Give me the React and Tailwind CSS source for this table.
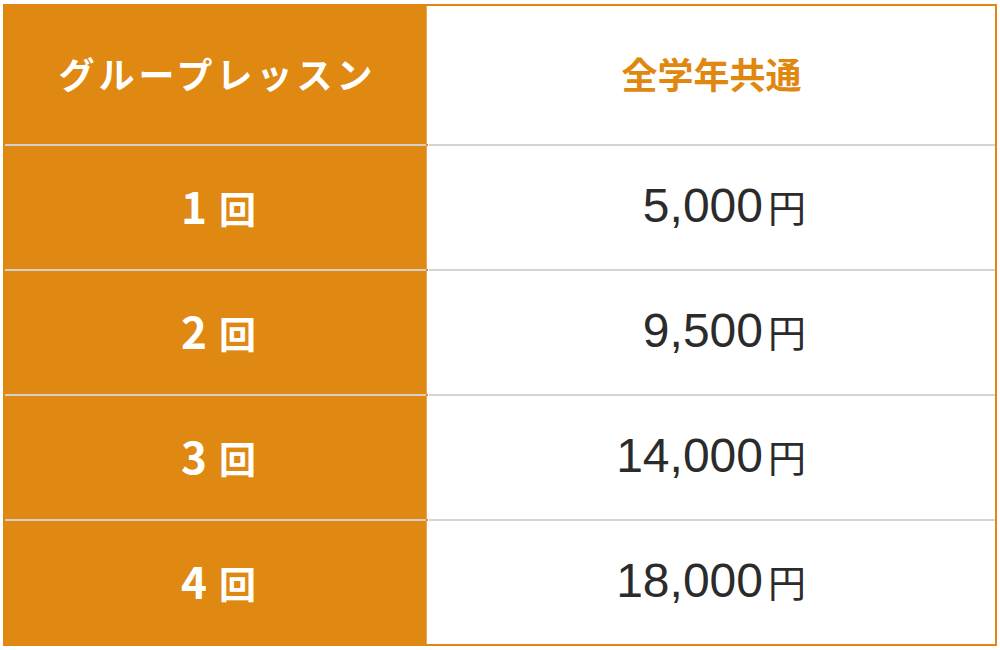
import React from "react";

const rows = [
  ["1", "5,000"],
  ["2", "9,500"],
  ["3", "14,000"],
  ["4", "18,000"],
];

const jp = { fontFamily: '"Noto Sans CJK JP", "Noto Sans", sans-serif' };

export default function App() {
  return (
    <div className="w-[1000px] h-[650px] bg-white pl-[3px] pt-[4px]">
      <div className="w-[994px] h-[642px] border-2 border-[#e0870f] flex flex-col" style={jp}>
        <div className="flex h-[138px]">
          <div className="w-[422px] bg-[#df8812] border-r border-[#eaa55a] flex items-center justify-center">
            <span className="text-white font-bold text-[36px] tracking-[4px] leading-none pl-[4px] -mt-[4px]">グループレッスン</span>
          </div>
          <div className="flex-1 ml-[1px] flex items-center justify-center">
            <span className="text-[#e0870f] font-bold text-[36px] leading-none -mt-[4px]">全学年共通</span>
          </div>
        </div>
        {rows.map(([n, price]) => (
          <div key={n} className="flex flex-col">
            <div className="flex h-[2px]">
              <div className="w-[421px] bg-[#d6d0ca]" />
              <div className="w-[2px] bg-[#df8812]" />
              <div className="flex-1 ml-[1px] bg-[#d4d4d4]" />
            </div>
            <div className="flex h-[123px]">
              <div className="w-[422px] bg-[#df8812] border-r border-[#eaa55a] flex items-center justify-center">
                <span className="text-white font-bold leading-none flex items-baseline pl-[6px] -mt-[6px]">
                  <span className="text-[44px]">{n}</span>
                  <span className="text-[37px] ml-[12px]">回</span>
                </span>
              </div>
              <div className="flex-1 ml-[1px] flex items-center justify-end pr-[189px] -mt-[4px]">
                <span className="text-[#2b2b2b] text-[48px] leading-none" style={{ fontFamily: '"Liberation Sans", Arial, sans-serif' }}>
                  {price}
                </span>
                <span className="text-[#2b2b2b] text-[38px] leading-none ml-[5px]" style={jp}>円</span>
              </div>
            </div>
          </div>
        ))}
      </div>
    </div>
  );
}
